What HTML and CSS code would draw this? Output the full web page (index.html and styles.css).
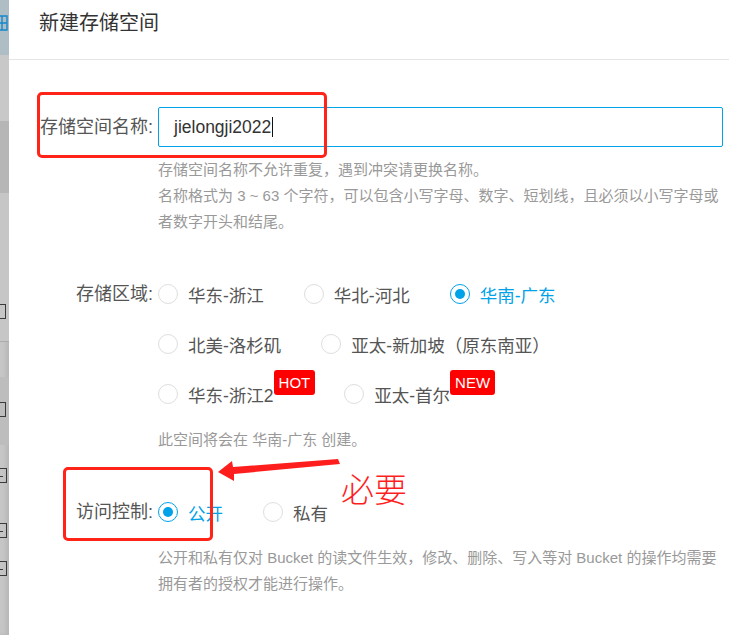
FILE: index.html
```html
<!DOCTYPE html>
<html lang="zh-CN">
<head>
  <meta charset="UTF-8">
  <title>新建存储空间</title>
  <link rel="stylesheet" href="styles.css">
</head>
<body>

  <div class="backdrop">
    <div class="bd-block bd-nav">
      <svg class="bd-icon" width="9" height="16" viewBox="0 0 9 16">
        <path d="M0 1H7V15H0M0 8H7M2 1V15" fill="none" stroke="#1688cc" stroke-width="1.4"/>
      </svg>
    </div>
    <div class="bd-block bd-a"></div>
    <div class="bd-block bd-b"></div>
    <div class="bd-block bd-c"><span class="bd-glyph"></span></div>
    <div class="bd-block bd-d"><span class="bd-glyph"></span></div>
    <div class="bd-block bd-e">
      <span class="bd-glyph dash"></span>
      <span class="bd-glyph dash"></span>
      <span class="bd-glyph dash"></span>
    </div>
  </div>

  <div class="modal">
    <div class="modal-header">新建存储空间</div>

    <div class="modal-body">
      <div class="field">
        <div class="field-label input-label">存储空间名称:</div>
        <div class="field-control">
          <div class="input">jielongji2022<span class="caret"></span></div>
          <div class="help help-first">
            存储空间名称不允许重复，遇到冲突请更换名称。<br>
            名称格式为 3 ~ 63 个字符，可以包含小写字母、数字、短划线，且必须以小写字母或<br>
            者数字开头和结尾。
          </div>
        </div>
      </div>

      <div class="field">
        <div class="field-label radio-label">存储区域:</div>
        <div class="field-control">
          <div class="option-row">
            <div class="option"><span class="radio"></span>华东-浙江</div>
            <div class="option"><span class="radio"></span>华北-河北</div>
            <div class="option checked"><span class="radio"></span>华南-广东</div>
          </div>
          <div class="option-row">
            <div class="option"><span class="radio"></span>北美-洛杉矶</div>
            <div class="option"><span class="radio"></span>亚太-新加坡（原东南亚）</div>
          </div>
          <div class="option-row">
            <div class="option"><span class="radio"></span>华东-浙江2<span class="badge">HOT</span></div>
            <div class="option"><span class="radio"></span>亚太-首尔<span class="badge">NEW</span></div>
          </div>
          <div class="help">此空间将会在 华南-广东 创建。</div>
        </div>
      </div>

      <div class="field">
        <div class="field-label radio-label">访问控制:</div>
        <div class="field-control">
          <div class="option-row">
            <div class="option checked"><span class="radio"></span>公开</div>
            <div class="option"><span class="radio"></span>私有</div>
          </div>
          <div class="help">
            公开和私有仅对 Bucket 的读文件生效，修改、删除、写入等对 Bucket 的操作均需要<br>
            拥有者的授权才能进行操作。
          </div>
        </div>
      </div>
    </div>
  </div>

  <!-- annotations drawn over the screenshot -->
  <div class="mark mark-name"></div>
  <div class="mark mark-acl"></div>
  <svg class="arrow" width="140" height="40" viewBox="210 450 140 40">
    <polygon points="218,472 232,461 233,467 338,459 340,464 234,474 234,481" fill="#ff1e1e"/>
  </svg>
  <div class="note">必要</div>

</body>
</html>
```

FILE: styles.css
```css
* {
  margin: 0;
  padding: 0;
  box-sizing: border-box;
}

html, body {
  height: 100%;
}

body {
  position: relative;
  display: flex;
  height: 635px;
  overflow: hidden;
  font-family: 'Liberation Sans', 'Noto Sans CJK SC', sans-serif;
  color: #555;
  background: #fff;
}

/* page behind the dialog */
.backdrop {
  width: 9px;
  flex-shrink: 0;
  overflow: hidden;
  display: flex;
  flex-direction: column;
  background: #c6c6c6;
  box-shadow: inset -3px 0 4px rgba(0, 0, 0, 0.08);
}

.bd-block {
  position: relative;
  overflow: hidden;
}

.bd-nav {
  height: 55px;
  background: #afbec4;
}

.bd-icon {
  display: block;
  margin-top: 15px;
}

.bd-a {
  height: 66px;
  background: #c8c8c8;
}

.bd-b {
  height: 72px;
  background: #b6b6b6;
}

.bd-c {
  height: 149px;
  background: #c6c6c6;
  border-bottom: 1px solid #ababab;
}

.bd-d {
  height: 68px;
  margin-top: 35px;
  background: #bdbdbd;
}

.bd-e {
  flex: 1;
}

/* right half of a glyph cut by the dialog edge */
.bd-glyph {
  display: block;
  width: 6px;
  height: 15px;
  border: 1px solid #3a3a3a;
  border-left: none;
}

.bd-c .bd-glyph {
  margin-top: 111px;
}

.bd-d .bd-glyph {
  margin-top: 25px;
}

.bd-e .bd-glyph {
  margin: 23px 0 40px;
}

.bd-e .bd-glyph:nth-child(2) {
  margin-bottom: 20px;
}

.bd-glyph.dash {
  width: 7px;
  border-right: none;
  border-top: none;
  border-bottom: none;
  background: linear-gradient(#3a3a3a, #3a3a3a) 0 8px / 3px 1px no-repeat;
  border-left: none;
  box-shadow: inset -1px 0 #3a3a3a, inset 0 1px #3a3a3a, inset 0 -1px #3a3a3a;
}

/* dialog */
.modal {
  flex: 1;
  background: #fff;
}

.modal-header {
  height: 60px;
  padding: 10px 30px 0;
  border-bottom: 1px solid #e5e5e5;
  font-size: 20px;
  line-height: 26px;
  color: #333;
}

.modal-body {
  padding: 47px 6px 0 0;
}

.field {
  display: flex;
  margin-bottom: 34px;
}

.field-label {
  width: 144px;
  margin-right: 5px;
  text-align: right;
  font-size: 18px;
  color: #555;
  flex-shrink: 0;
}

.input-label {
  line-height: 40px;
}

.radio-label {
  line-height: 50px;
}

.field-control {
  flex: 1;
}

.input {
  height: 40px;
  padding-left: 15px;
  border: 1px solid #00a2e8;
  border-radius: 2px;
  font-size: 17.5px;
  line-height: 38px;
  color: #333;
}

.caret {
  display: inline-block;
  width: 1px;
  height: 20px;
  margin-left: 1px;
  vertical-align: -4px;
  background: #111;
}

.help {
  margin-top: 8px;
  font-size: 15px;
  line-height: 26px;
  color: #999;
  white-space: nowrap;
}

.help-first {
  margin-top: 10px;
}

.option-row {
  display: flex;
  height: 50px;
}

.option {
  display: flex;
  align-items: center;
  margin-right: 40px;
  font-size: 17.5px;
  color: #555;
  white-space: nowrap;
}

.radio {
  width: 20px;
  height: 20px;
  margin-right: 10px;
  border: 1px solid #dedede;
  border-radius: 50%;
  display: flex;
  align-items: center;
  justify-content: center;
}

.option.checked {
  color: #00a2e8;
}

.option.checked .radio {
  border-color: #00a2e8;
}

.option.checked .radio::after {
  content: "";
  width: 10px;
  height: 10px;
  border-radius: 50%;
  background: #00a2e8;
}

.badge {
  position: relative;
  top: -12px;
  height: 25px;
  padding: 0 5px;
  margin-right: -11px;
  border-radius: 3px;
  background: #ff0000;
  color: #fff;
  font-family: 'Liberation Sans', sans-serif;
  font-size: 15px;
  line-height: 25px;
}

/* red annotations */
.mark {
  position: absolute;
  border: 3px solid #ff2318;
  border-radius: 5px;
}

.mark-name {
  left: 37px;
  top: 92px;
  width: 290px;
  height: 66px;
}

.mark-acl {
  left: 63px;
  top: 467px;
  width: 150px;
  height: 74px;
}

.arrow {
  position: absolute;
  left: 210px;
  top: 450px;
}

.note {
  position: absolute;
  left: 341px;
  top: 466px;
  font-family: 'Noto Sans CJK SC', sans-serif;
  font-size: 33px;
  line-height: 44px;
  font-weight: 300;
  color: #ff1e1e;
}
```
